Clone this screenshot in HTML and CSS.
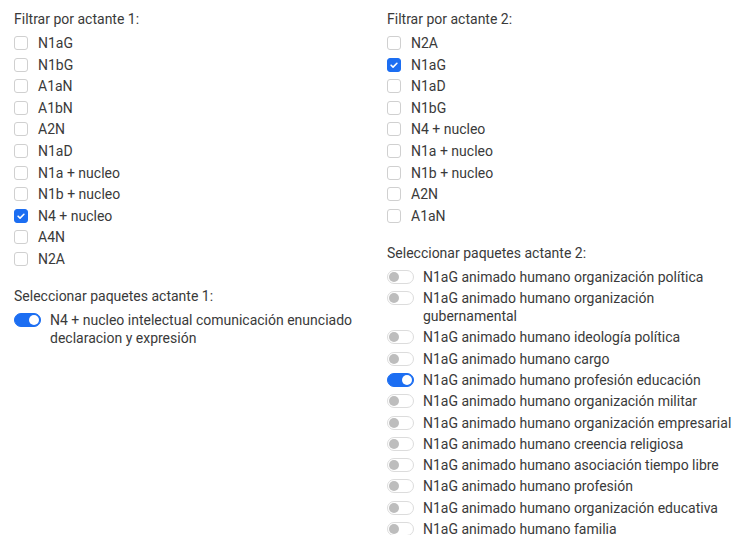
FILE: index.html
```html
<!DOCTYPE html>
<html lang="es">
<head>
<meta charset="utf-8">
<title>Filtros de actantes</title>
<link rel="stylesheet" href="styles.css">
</head>
<body>
<div class="filters">
  <section class="col">
    <p class="group-title">Filtrar por actante 1:</p>
    <ul class="checks">
      <li><span class="box"></span>N1aG</li>
      <li><span class="box"></span>N1bG</li>
      <li><span class="box"></span>A1aN</li>
      <li><span class="box"></span>A1bN</li>
      <li><span class="box"></span>A2N</li>
      <li><span class="box"></span>N1aD</li>
      <li><span class="box"></span>N1a + nucleo</li>
      <li><span class="box"></span>N1b + nucleo</li>
      <li><span class="box on"><svg viewBox="0 0 14 14"><path d="M3.6 7.2l2.3 2.3 4.5-4.6" /></svg></span>N4 + nucleo</li>
      <li><span class="box"></span>A4N</li>
      <li><span class="box"></span>N2A</li>
    </ul>
    <p class="group-title packs">Seleccionar paquetes actante 1:</p>
    <ul class="switches">
      <li><span class="switch on"></span><span class="txt">N4 + nucleo intelectual comunicación enunciado declaracion y expresión</span></li>
    </ul>
  </section>
  <section class="col">
    <p class="group-title">Filtrar por actante 2:</p>
    <ul class="checks">
      <li><span class="box"></span>N2A</li>
      <li><span class="box on"><svg viewBox="0 0 14 14"><path d="M3.6 7.2l2.3 2.3 4.5-4.6" /></svg></span>N1aG</li>
      <li><span class="box"></span>N1aD</li>
      <li><span class="box"></span>N1bG</li>
      <li><span class="box"></span>N4 + nucleo</li>
      <li><span class="box"></span>N1a + nucleo</li>
      <li><span class="box"></span>N1b + nucleo</li>
      <li><span class="box"></span>A2N</li>
      <li><span class="box"></span>A1aN</li>
    </ul>
    <p class="group-title packs">Seleccionar paquetes actante 2:</p>
    <ul class="switches">
      <li><span class="switch"></span><span class="txt">N1aG animado humano organización política</span></li>
      <li><span class="switch"></span><span class="txt">N1aG animado humano organización gubernamental</span></li>
      <li><span class="switch"></span><span class="txt">N1aG animado humano ideología política</span></li>
      <li><span class="switch"></span><span class="txt">N1aG animado humano cargo</span></li>
      <li><span class="switch on"></span><span class="txt">N1aG animado humano profesión educación</span></li>
      <li><span class="switch"></span><span class="txt">N1aG animado humano organización militar</span></li>
      <li><span class="switch"></span><span class="txt">N1aG animado humano organización empresarial</span></li>
      <li><span class="switch"></span><span class="txt">N1aG animado humano creencia religiosa</span></li>
      <li><span class="switch"></span><span class="txt">N1aG animado humano asociación tiempo libre</span></li>
      <li><span class="switch"></span><span class="txt">N1aG animado humano profesión</span></li>
      <li><span class="switch"></span><span class="txt">N1aG animado humano organización educativa</span></li>
      <li><span class="switch"></span><span class="txt">N1aG animado humano familia</span></li>
    </ul>
  </section>
</div>
</body>
</html>
```

FILE: styles.css
```css
html, body {
  margin: 0;
  background: #ffffff;
  overflow: hidden;
}

body {
  font-family: Roboto, "Liberation Sans", Arial, sans-serif;
  font-size: 14px;
  line-height: 18px;
  color: #3a3a3a;
}

.filters {
  display: grid;
  grid-template-columns: 358px 358px;
  column-gap: 15px;
  padding: 10px 0 0 14px;
}

.group-title {
  margin: 0 0 6px;
}

.group-title.packs {
  margin-top: 19px;
}

ul {
  list-style: none;
  margin: 0;
  padding: 0;
}

.checks li {
  display: flex;
  align-items: flex-start;
  margin-bottom: 3.6px;
}

.switches li {
  display: flex;
  align-items: flex-start;
  margin-bottom: 3.3px;
}

.box {
  flex: none;
  width: 14px;
  height: 14px;
  box-sizing: border-box;
  margin: 2px 10px 0 0;
  border: 1px solid #d0d0d0;
  border-radius: 3px;
  background: #ffffff;
}

.box.on {
  background: #1c6ef2;
  border-color: #1c6ef2;
}

.box svg {
  display: block;
  width: 12px;
  height: 12px;
}

.box svg path {
  fill: none;
  stroke: #ffffff;
  stroke-width: 1.8;
  stroke-linecap: round;
  stroke-linejoin: round;
}

.switch {
  flex: none;
  position: relative;
  width: 27px;
  height: 14px;
  box-sizing: border-box;
  margin: 2px 9px 0 0;
  border: 1px solid #dcdcdc;
  border-radius: 7px;
  background: #ffffff;
}

.switch::after {
  content: "";
  position: absolute;
  top: 1px;
  left: 1px;
  width: 10px;
  height: 10px;
  border-radius: 50%;
  background: #bdbdbd;
}

.switch.on {
  background: #1c6ef2;
  border-color: #1c6ef2;
}

.switch.on::after {
  left: auto;
  right: 1px;
  background: #ffffff;
}

.txt {
  flex: 1;
}
```
